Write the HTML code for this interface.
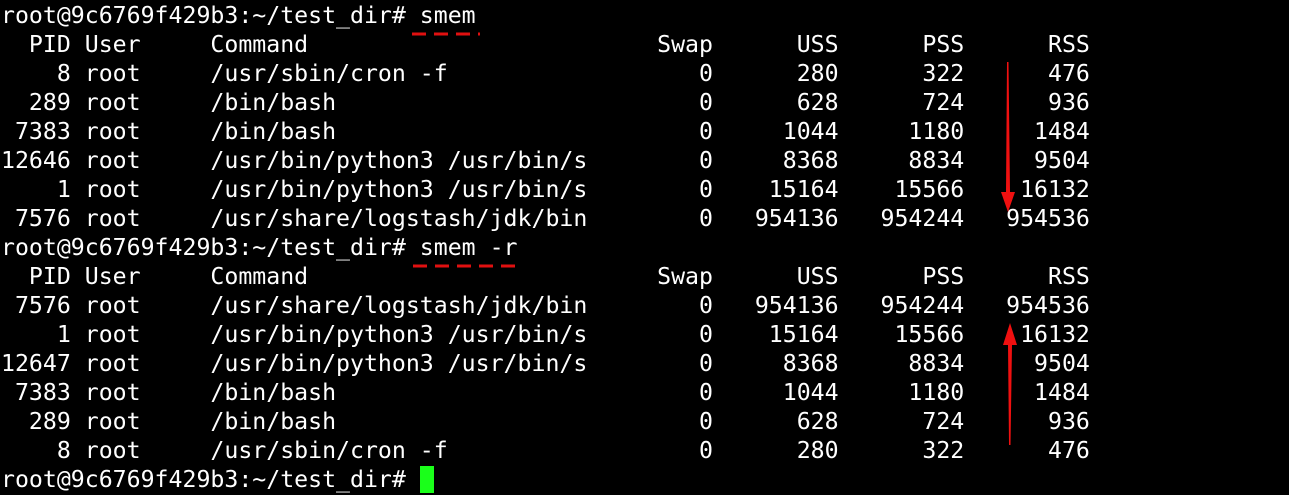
<!DOCTYPE html>
<html><head><meta charset="utf-8"><style>
html,body{margin:0;padding:0;background:#000;width:1289px;height:495px;overflow:hidden}
pre{margin:0;padding:1px 0 0 1px;font-family:"DejaVu Sans Mono","Liberation Mono",monospace;font-size:23.2px;line-height:29px;color:#fff;white-space:pre}
.cur{background:#1aff1a;color:#1aff1a}
svg{position:absolute;left:0;top:0}
</style></head><body>
<pre>root@9c6769f429b3:~/test_dir# smem
  PID User     Command                         Swap      USS      PSS      RSS
    8 root     /usr/sbin/cron -f                  0      280      322      476
  289 root     /bin/bash                          0      628      724      936
 7383 root     /bin/bash                          0     1044     1180     1484
12646 root     /usr/bin/python3 /usr/bin/s        0     8368     8834     9504
    1 root     /usr/bin/python3 /usr/bin/s        0    15164    15566    16132
 7576 root     /usr/share/logstash/jdk/bin        0   954136   954244   954536
root@9c6769f429b3:~/test_dir# smem -r
  PID User     Command                         Swap      USS      PSS      RSS
 7576 root     /usr/share/logstash/jdk/bin        0   954136   954244   954536
    1 root     /usr/bin/python3 /usr/bin/s        0    15164    15566    16132
12647 root     /usr/bin/python3 /usr/bin/s        0     8368     8834     9504
 7383 root     /bin/bash                          0     1044     1180     1484
  289 root     /bin/bash                          0      628      724      936
    8 root     /usr/sbin/cron -f                  0      280      322      476
root@9c6769f429b3:~/test_dir# <span class="cur"> </span></pre>
<svg width="1289" height="495">
<line x1="412" y1="34" x2="480" y2="34" stroke="#e01010" stroke-width="3" stroke-dasharray="14,8"/>
<line x1="413" y1="266" x2="518" y2="266" stroke="#e01010" stroke-width="3" stroke-dasharray="14,8"/>
<polygon points="1007,62 1008.5,62 1010,192 1015,192 1008,212 1001,192 1006,192" fill="#f01010"/>
<polygon points="1009,445 1010.5,445 1012,345 1017,345 1010,323 1003,345 1008,345" fill="#f01010"/>
</svg>
</body></html>
